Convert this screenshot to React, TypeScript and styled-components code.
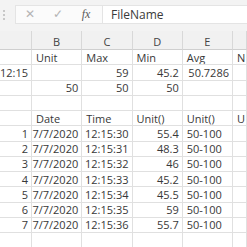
import React from "react";
import styled, { createGlobalStyle } from "styled-components";

const GlobalStyle = createGlobalStyle`
  html, body {
    margin: 0;
    padding: 0;
    overflow: hidden;
    background: #ffffff;
  }
  body {
    font-family: "Open Sans", "Liberation Sans", sans-serif;
  }
`;

const Page = styled.div`
  width: 247px;
  height: 247px;
  overflow: hidden;
  display: flex;
  flex-direction: column;
  background: #ffffff;
`;

const FormulaBar = styled.div`
  height: 31px;
  flex-shrink: 0;
  display: flex;
  align-items: center;
  padding: 2px 0 4px 0;
  box-sizing: border-box;
  background: #f3f3f3;
`;

const Grip = styled.div`
  width: 15px;
  display: flex;
  flex-direction: column;
  align-items: flex-start;
  padding-left: 3px;
  box-sizing: border-box;
  gap: 2px;

  span {
    width: 2px;
    height: 2px;
    background: #c8c8c8;
  }
`;

const Buttons = styled.div`
  width: 86px;
  height: 17px;
  display: flex;
  align-items: center;
  background: #fbfbfb;
  border: 1px solid #e4e4e4;
  border-right: none;
`;

const BarButton = styled.div<{ $dark?: boolean }>`
  width: 28px;
  display: flex;
  justify-content: center;
  align-items: center;
  color: ${({ $dark }) => ($dark ? "#5a5a5a" : "#b4b4b4")};
  font-size: 12px;
  font-family: "Liberation Serif", serif;
  font-style: ${({ $dark }) => ($dark ? "italic" : "normal")};
`;

const FormulaInput = styled.div`
  flex: 1;
  height: 17px;
  display: flex;
  align-items: center;
  padding-left: 8px;
  background: #ffffff;
  border: 1px solid #e4e4e4;
  border-right: none;
  font-size: 12px;
  color: #3a3a3a;
`;

const Sheet = styled.div`
  display: grid;
  grid-template-columns: 32px 50.25px 50.25px 50.25px 50.25px 1fr;
  grid-template-rows: 19px repeat(13, 15.25px);
  font-size: 11px;
  color: #383838;
`;

const ColHeader = styled.div`
  background: #f1f1f1;
  border-right: 1px solid #d8d8d8;
  border-bottom: 1px solid #cfcfcf;
  display: flex;
  align-items: center;
  justify-content: center;
  padding-top: 2px;
  box-sizing: border-box;
  color: #444444;
  font-size: 11px;
`;

const Cell = styled.div<{ $align?: "left" | "right" }>`
  border-right: 1px solid #e0e0e0;
  border-bottom: 1px solid #e0e0e0;
  display: flex;
  align-items: center;
  justify-content: ${({ $align }) => ($align === "right" ? "flex-end" : "flex-start")};
  padding: 0 3px 0 4px;
  white-space: nowrap;
  overflow: hidden;
  line-height: 1;

  span {
    flex-shrink: 0;
  }
`;

type CellData = string | { v: string; r?: boolean };

const headers = ["", "B", "C", "D", "E", ""];

const dataRows: [string, string, string][] = [
  ["30", "55.4", "50-100"],
  ["31", "48.3", "50-100"],
  ["32", "46", "50-100"],
  ["33", "45.2", "50-100"],
  ["34", "45.5", "50-100"],
  ["35", "59", "50-100"],
  ["36", "55.7", "50-100"],
];

const rows: CellData[][] = [
  ["", "Unit", "Max", "Min", "Avg", "N"],
  [{ v: "7/7/2020 12:15", r: true }, "", { v: "59", r: true }, { v: "45.2", r: true }, { v: "50.7286", r: true }, ""],
  ["", { v: "50", r: true }, { v: "50", r: true }, { v: "50", r: true }, "", ""],
  ["", "", "", "", "", ""],
  ["", "Date", "Time", "Unit()", "Unit()", "U"],
  ...dataRows.map(([sec, val, range], i): CellData[] => [
    { v: String(i + 1), r: true },
    { v: "7/7/2020", r: true },
    { v: `12:15:${sec}`, r: true },
    { v: val, r: true },
    range,
    "",
  ]),
  ["", "", "", "", "", ""],
];

const App: React.FC = () => {
  return (
    <Page>
      <GlobalStyle />
      <FormulaBar>
        <Grip>
          <span />
          <span />
          <span />
        </Grip>
        <Buttons>
          <BarButton>✕</BarButton>
          <BarButton>✓</BarButton>
          <BarButton $dark>fx</BarButton>
        </Buttons>
        <FormulaInput>FileName</FormulaInput>
      </FormulaBar>
      <Sheet>
        {headers.map((h, i) => (
          <ColHeader key={`h${i}`}>{h}</ColHeader>
        ))}
        {rows.map((row, ri) =>
          row.map((c, ci) => {
            const v = typeof c === "string" ? c : c.v;
            const right = typeof c !== "string" && c.r;
            return (
              <Cell key={`${ri}-${ci}`} $align={right ? "right" : "left"}>
                {v && <span>{v}</span>}
              </Cell>
            );
          })
        )}
      </Sheet>
    </Page>
  );
};

export default App;
